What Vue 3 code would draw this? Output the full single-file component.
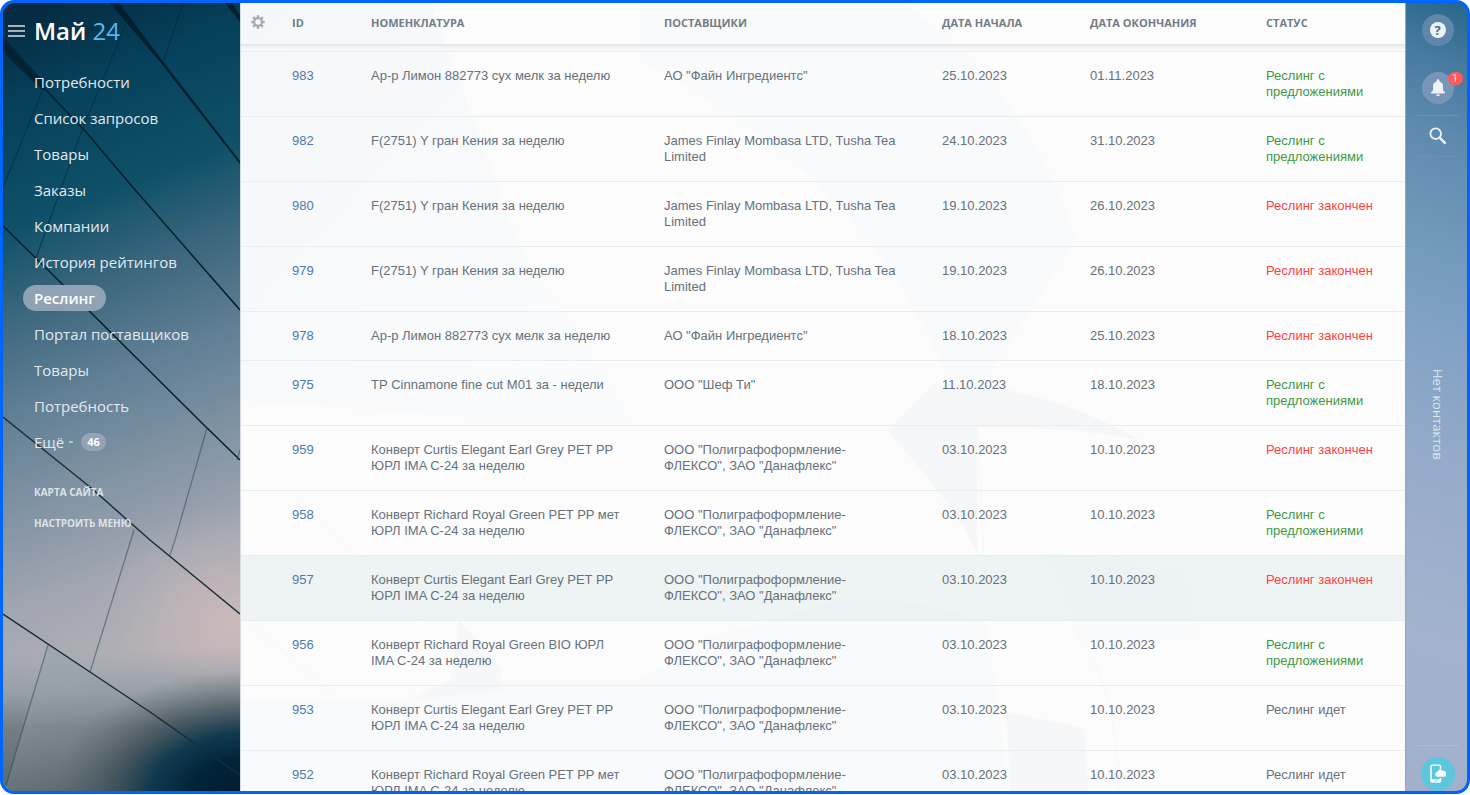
<script setup>
const menu = [
  { label: 'Потребности' },
  { label: 'Список запросов' },
  { label: 'Товары' },
  { label: 'Заказы' },
  { label: 'Компании' },
  { label: 'История рейтингов' },
  { label: 'Реслинг', active: true },
  { label: 'Портал поставщиков' },
  { label: 'Товары' },
  { label: 'Потребность' },
]

const lemon = 'Ар-р Лимон 882773 сух мелк за неделю'
const kenya = 'F(2751) Y гран Кения за неделю'
const curtis = 'Конверт Curtis Elegant Earl Grey PET PP ЮРЛ IMA C-24 за неделю'
const richard = 'Конверт Richard Royal Green PET PP мет ЮРЛ IMA C-24 за неделю'
const fine = 'АО "Файн Ингредиентс"'
const james = 'James Finlay Mombasa LTD, Tusha Tea Limited'
const poly = 'ООО "Полиграфоформление-ФЛЕКСО", ЗАО "Данафлекс"'
const statuses = {
  offers: 'Реслинг с предложениями',
  closed: 'Реслинг закончен',
  running: 'Реслинг идет',
}
const rows = [
  { id: 983, name: lemon, supplier: fine, start: '25.10.2023', end: '01.11.2023', status: 'offers' },
  { id: 982, name: kenya, supplier: james, start: '24.10.2023', end: '31.10.2023', status: 'offers' },
  { id: 980, name: kenya, supplier: james, start: '19.10.2023', end: '26.10.2023', status: 'closed' },
  { id: 979, name: kenya, supplier: james, start: '19.10.2023', end: '26.10.2023', status: 'closed' },
  { id: 978, name: lemon, supplier: fine, start: '18.10.2023', end: '25.10.2023', status: 'closed' },
  { id: 975, name: 'ТР Cinnamone fine cut М01 за - недели', supplier: 'ООО "Шеф Ти"', start: '11.10.2023', end: '18.10.2023', status: 'offers' },
  { id: 959, name: curtis, supplier: poly, start: '03.10.2023', end: '10.10.2023', status: 'closed' },
  { id: 958, name: richard, supplier: poly, start: '03.10.2023', end: '10.10.2023', status: 'offers' },
  { id: 957, name: curtis, supplier: poly, start: '03.10.2023', end: '10.10.2023', status: 'closed', hover: true },
  { id: 956, name: 'Конверт Richard Royal Green BIO ЮРЛ IMA C-24 за неделю', supplier: poly, start: '03.10.2023', end: '10.10.2023', status: 'offers' },
  { id: 953, name: curtis, supplier: poly, start: '03.10.2023', end: '10.10.2023', status: 'running' },
  { id: 952, name: richard, supplier: poly, start: '03.10.2023', end: '10.10.2023', status: 'running' },
]
</script>

<template>
  <div class="page">
    <div class="frame">
      <aside class="sidebar">
        <svg class="art" viewBox="3 3 237 788" preserveAspectRatio="none" aria-hidden="true">
          <defs>
            <linearGradient id="sky" gradientUnits="userSpaceOnUse" x1="20" y1="20" x2="250" y2="620">
              <stop offset="0" stop-color="#052c42" />
              <stop offset="0.12" stop-color="#06405a" />
              <stop offset="0.3" stop-color="#0f5169" />
              <stop offset="0.42" stop-color="#3a667c" />
              <stop offset="0.56" stop-color="#5f7e94" />
              <stop offset="0.72" stop-color="#8294a5" />
              <stop offset="0.86" stop-color="#a2a6b1" />
              <stop offset="1" stop-color="#b2b0b5" />
            </linearGradient>
            <linearGradient id="ground" x1="0" y1="0" x2="0" y2="1">
              <stop offset="0" stop-color="#9aa3ac" stop-opacity="0" />
              <stop offset="0.3" stop-color="#959da5" stop-opacity="0.9" />
              <stop offset="0.55" stop-color="#767e84" />
              <stop offset="1" stop-color="#59686d" />
            </linearGradient>
            <radialGradient id="dusk" gradientUnits="userSpaceOnUse" cx="0" cy="0" r="1" gradientTransform="translate(250 795) scale(200 125)">
              <stop offset="0" stop-color="#001b2e" />
              <stop offset="0.3" stop-color="#022438" />
              <stop offset="0.5" stop-color="#08344b" stop-opacity="0.92" />
              <stop offset="0.7" stop-color="#33474f" stop-opacity="0.6" />
              <stop offset="1" stop-color="#566469" stop-opacity="0" />
            </radialGradient>
            <radialGradient id="rose" gradientUnits="userSpaceOnUse" cx="0" cy="0" r="1" gradientTransform="translate(235 625) scale(150 120)">
              <stop offset="0" stop-color="#ccb9ba" />
              <stop offset="0.4" stop-color="#c2b5b9" stop-opacity="0.8" />
              <stop offset="1" stop-color="#b0afb6" stop-opacity="0" />
            </radialGradient>
            <linearGradient id="panel" gradientUnits="userSpaceOnUse" x1="30" y1="650" x2="110" y2="790">
              <stop offset="0" stop-color="#9aa5ae" stop-opacity="0.7" />
              <stop offset="1" stop-color="#858b91" stop-opacity="0" />
            </linearGradient>
          </defs>
          <rect x="3" y="3" width="237" height="788" fill="url(#sky)" />
          <rect x="3" y="490" width="237" height="260" fill="url(#rose)" />
          <rect x="3" y="650" width="237" height="141" fill="url(#ground)" />
          <path d="M48 645 90 672 150 712 240 775V791H5Z" fill="url(#panel)" />
          <rect x="3" y="660" width="237" height="131" fill="url(#dusk)" />
          <path d="M3 37 45 83 43 91 3 52Z" fill="#03202f" opacity=".8" />
          <path d="M110 3H119L162 60 240 161V164L160 62Z" fill="#03202f" />
          <path d="M225 3H232L240 15V22Z" fill="#03202f" />
          <g fill="none" stroke="#061f2b" stroke-width="1.5">
            <path d="M3 45 43 87 86 132 130 184 205 270 240 310" />
            <path d="M3 226 48 270 207 428 240 460" />
            <path d="M3 417 90 487 150 540 240 614" stroke="#1b3139" />
            <path d="M3 614 90 672 150 712 240 775" stroke="#152e39" />
          </g>
          <g fill="none" stroke="#29485a" stroke-opacity=".5" stroke-width="1.3">
            <path d="M126 24 82 130 36 258M183 3 163 62M42 92 3 187" stroke="#042d42" stroke-opacity=".65" />
            <path d="M207 428 175 540 170 555M240 450 237 460M134 530 90 672M48 645 6 785" />
          </g>
        </svg>

        <header class="brand">
          <button class="burger" type="button" aria-label="Меню"><i></i><i></i><i></i></button>
          <a href="#" class="logo">Май <span>24</span></a>
        </header>
        <nav class="menu">
          <a v-for="(item, i) in menu" :key="i" href="#" class="item" :class="{ active: item.active }">
            <span>{{ item.label }}</span>
          </a>
          <a href="#" class="item more"><span>Ещё</span><i class="dash"></i><b class="count">46</b></a>
        </nav>
        <div class="links">
          <a href="#">КАРТА САЙТА</a>
          <a href="#">НАСТРОИТЬ МЕНЮ</a>
        </div>
      </aside>

      <main class="content">
        <svg class="art" viewBox="240 3 1165 788" preserveAspectRatio="none" aria-hidden="true">
          <defs>
            <linearGradient id="haze" x1="0" y1="0" x2="1" y2="1">
              <stop offset="0" stop-color="#f5f7f9" />
              <stop offset="1" stop-color="#fbfcfd" />
            </linearGradient>
          </defs>
          <path d="M240 3H430L520 250 640 430 240 400Z" fill="url(#haze)" />
          <path d="M640 3H900Q1030 90 1075 240L960 420Q900 200 640 60Z" fill="#f9fafc" />
          <path d="M887 431 936 382Q1040 385 1140 440 1060 425 977 428V553Q950 500 887 431Z" fill="#f6f7f9" />
          <path d="M840 600 890 598 985 620 1010 791H240V700H400L450 680H640L700 640Z" fill="#f9fafb" />
          <path d="M458 620 450 680 410 700 500 690 500 668Z" fill="#f5f7f8" />
          <path d="M1006 712 1084 728 1088 791H1010Z" fill="#f6f7f9" />
          <path d="M1045 550 1187 570 1195 640 1080 640Z" fill="#fafbfc" />
          <path d="M977 430 987 620M1070 620Q1120 690 1118 791M300 500 420 620M240 615 350 710" fill="none" stroke="#f6f7f8" />
        </svg>
        <table class="grid">
          <colgroup>
            <col class="c-gear" />
            <col class="c-id" />
            <col class="c-name" />
            <col class="c-supplier" />
            <col class="c-start" />
            <col class="c-end" />
            <col class="c-status" />
          </colgroup>
          <thead>
            <tr>
              <th class="gear-cell">
                <button class="gear" type="button" aria-label="Настроить таблицу">
                  <svg width="14" height="14" viewBox="0 0 14 14">
                    <circle cx="7" cy="7" r="3.9" fill="none" stroke="#a4abb1" stroke-width="2.3" />
                    <path d="M7 .3V2.4M7 11.6V13.700M.3 7H2.400M11.600 7H13.700M2.200 2.200 3.800 3.800M10.200 10.200 11.800 11.800M11.800 2.200 10.200 3.800M3.800 10.200 2.200 11.800" stroke="#a4abb1" stroke-width="2.500" />
                  </svg>
                </button>
              </th>
              <th>ID</th>
              <th>НОМЕНКЛАТУРА</th>
              <th>ПОСТАВЩИКИ</th>
              <th>ДАТА НАЧАЛА</th>
              <th>ДАТА ОКОНЧАНИЯ</th>
              <th>СТАТУС</th>
            </tr>
          </thead>
          <tbody>
            <tr v-for="row in rows" :key="row.id" :class="{ hover: row.hover }">
              <td></td>
              <td><a href="#">{{ row.id }}</a></td>
              <td>{{ row.name }}</td>
              <td>{{ row.supplier }}</td>
              <td>{{ row.start }}</td>
              <td>{{ row.end }}</td>
              <td :class="row.status">{{ statuses[row.status] }}</td>
            </tr>
          </tbody>
        </table>
      </main>

      <aside class="rail">
        <button class="round help" type="button" aria-label="Помощь"><span>?</span></button>
        <button class="round bell" type="button" aria-label="Уведомления">
          <svg width="16" height="18" viewBox="0 0 16 18" fill="#eef2f6">
            <path d="M6.6 2.5V1.6a1.4 1.4 0 0 1 2.8 0v.9C11.700 3.100 13 4.900 13 7.300v4l2 2.300V14.500H1v-.9l2-2.300v-4C3 4.900 4.300 3.100 6.600 2.500ZM5.900 15.500h4.200C9.900 16.800 9 17.200 8 17.200S6.100 16.800 5.900 15.500Z" />
          </svg>
          <b class="badge">1</b>
        </button>
        <button class="search" type="button" aria-label="Поиск">
          <svg width="18" height="18" viewBox="0 0 18 18" fill="none" stroke="#eef2f6">
            <circle cx="6.700" cy="6.700" r="5.300" stroke-width="1.900" />
            <path d="M10.600 10.600 16.600 16.600" stroke-width="2.400" />
          </svg>
        </button>
        <span class="contacts">Нет контактов</span>
        <div class="bottom">
          <button class="device" type="button" aria-label="Мобильное приложение">
            <svg width="16" height="20" viewBox="0 0 16 20">
              <path d="M10.500 5V2.200q0-1-1-1H2q-1 0-1 1V17q0 1 1 1H9.500q1 0 1-1V14" fill="none" stroke="#f5fbfd" stroke-width="1.600" />
              <path d="M1 15.200H10.500V18H1Z" fill="#f5fbfd" />
              <circle cx="5.800" cy="16.700" r=".8" fill="#5bc6de" />
              <path d="M7.800 12.800a2.500 2.500 0 0 1-.2-5 3 3 0 0 1 5.400-.9 2.600 2.600 0 0 1 .8 5.900Z" fill="#f5fbfd" />
            </svg>
          </button>
        </div>
      </aside>
    </div>
  </div>
</template>

<style>
body {
  background: #fff;
}
</style>

<style scoped>
* {
  box-sizing: border-box;
}
.page {
  height: 100vh;
  padding-bottom: 1px;
}
.frame {
  display: grid;
  grid-template-columns: 237px minmax(0, 1fr) 62px;
  grid-template-rows: minmax(0, 1fr);
  height: 100%;
  overflow: hidden;
  border: 3px solid #0065ff;
  border-radius: 14px;
  background: #0065ff;
  font-family: "Open Sans", "Noto Sans", sans-serif;
}
a {
  color: inherit;
  text-decoration: none;
}
button {
  padding: 0;
  border: 0;
  background: none;
  font: inherit;
}
.art {
  position: absolute;
  inset: 0;
  width: 100%;
  height: 100%;
}

.sidebar {
  position: relative;
  overflow: hidden;
  border-radius: 11px 0 0 11px;
}
.brand,
.menu,
.links {
  position: relative;
}
.brand {
  display: flex;
  align-items: center;
  height: 61px;
  padding: 0 0 5px 5px;
  gap: 9px;
}
.burger {
  display: flex;
  flex-direction: column;
  gap: 3px;
  width: 17px;
}
.burger i {
  height: 2px;
  background: #a7b1b9;
}
.logo {
  color: #fff;
  font-size: 24px;
  font-weight: 600;
  line-height: 32px;
}
.logo span {
  color: #57b7f2;
  font-weight: 400;
}
.menu {
  display: flex;
  flex-direction: column;
  padding-left: 20px;
}
.item {
  display: flex;
  align-items: center;
  height: 36px;
  color: #e3e8ec;
  font-size: 15px;
  line-height: 26px;
}
.item span {
  padding: 0 11px;
  border-radius: 13px;
}
.item.active span {
  background: #8fa3b4;
  color: #fff;
  font-weight: 600;
}
.item.more span {
  padding-right: 5px;
}
.dash {
  width: 4px;
  height: 2px;
  background: #b4c0c9;
}
.count {
  height: 18px;
  margin-left: 8px;
  padding: 0 6px;
  border-radius: 9px;
  background: #94a4b4;
  color: #fff;
  font-size: 11px;
  font-weight: 700;
  line-height: 18px;
}
.links {
  display: flex;
  flex-direction: column;
  align-items: flex-start;
  gap: 15px;
  padding: 24px 0 0 31px;
  color: #dfe3e7;
  font-size: 10px;
  font-weight: 700;
  line-height: 16px;
}

.content {
  position: relative;
  overflow: hidden;
  border-left: 1px solid #d5dce3;
  background: #fcfcfd;
}
.grid {
  position: relative;
  width: 100%;
  table-layout: fixed;
  border-spacing: 0;
  background: linear-gradient(#dfe3e5, #eff2f3 40%, #f8fafa) no-repeat 0 41px / 100% 6px;
  color: #66717b;
  font-family: "Liberation Sans", Arial, sans-serif;
  font-size: 13px;
  line-height: 16px;
}
.c-gear {
  width: 35px;
}
.c-id {
  width: 79px;
}
.c-supplier {
  width: 278px;
}
.c-start {
  width: 148px;
}
.c-end {
  width: 176px;
}
.c-status {
  width: 155px;
}
th,
td {
  padding: 16px 24px 16px 16px;
  border-bottom: 1px solid #e9eeef;
  text-align: left;
  vertical-align: top;
}
th {
  padding: 12px 0 20px 16px;
  color: #737d86;
  font-family: "Open Sans", "Noto Sans", sans-serif;
  font-size: 11px;
  font-weight: 700;
  white-space: nowrap;
}
.gear-cell {
  padding: 12px 0 20px 10px;
}
.gear {
  display: block;
  height: 14px;
}
.gear svg {
  display: block;
}
.hover td {
  background: rgba(226, 235, 236, 0.55);
}
td a {
  color: #4e7aac;
}
.offers {
  color: #3f993f;
}
.closed {
  color: #ff4343;
}

.rail {
  display: flex;
  flex-direction: column;
  align-items: center;
  padding-top: 11px;
  padding-left: 2px;
  border-left: 1px solid #8ca8bf;
  border-radius: 0 11px 11px 0;
  background: linear-gradient(200deg, #276787 0, #467a9f 8%, #5f8bb0 18%, #7c9fc4 38%, #95abc9 58%, #a3b3ce 80%, #a1b1cc 100%);
}
.round {
  position: relative;
  display: grid;
  place-items: center;
  flex: none;
  width: 32px;
  height: 32px;
  border-radius: 50%;
  background: #5f87a9;
}
.help span {
  width: 16px;
  height: 16px;
  border-radius: 50%;
  background: #eef2f6;
  color: #416f93;
  font-size: 13px;
  font-weight: 700;
  line-height: 16px;
}
.bell {
  margin-top: 26px;
  background: #7795b8;
}
.badge {
  position: absolute;
  top: 0;
  right: -9px;
  width: 15px;
  height: 13px;
  border-radius: 7px;
  background: #ff5b5b;
  color: #fff;
  font-size: 10px;
  font-weight: 400;
  line-height: 13px;
}
.search {
  display: grid;
  place-items: center;
  flex: none;
  width: 42px;
  height: 42px;
  margin-top: 11px;
  border-top: 1px solid #6b93b6;
  border-bottom: 1px solid #6b93b6;
}
.contacts {
  margin-top: 212px;
  color: #dde5ee;
  font-size: 13px;
  line-height: 16px;
  writing-mode: vertical-rl;
}
.bottom {
  display: flex;
  justify-content: center;
  width: 42px;
  margin-top: auto;
  padding-top: 11px;
  border-top: 1px solid #adbcd3;
}
.device {
  display: grid;
  place-items: center;
  width: 34px;
  height: 34px;
  border-radius: 50%;
  background: #5bc6de;
}
</style>
